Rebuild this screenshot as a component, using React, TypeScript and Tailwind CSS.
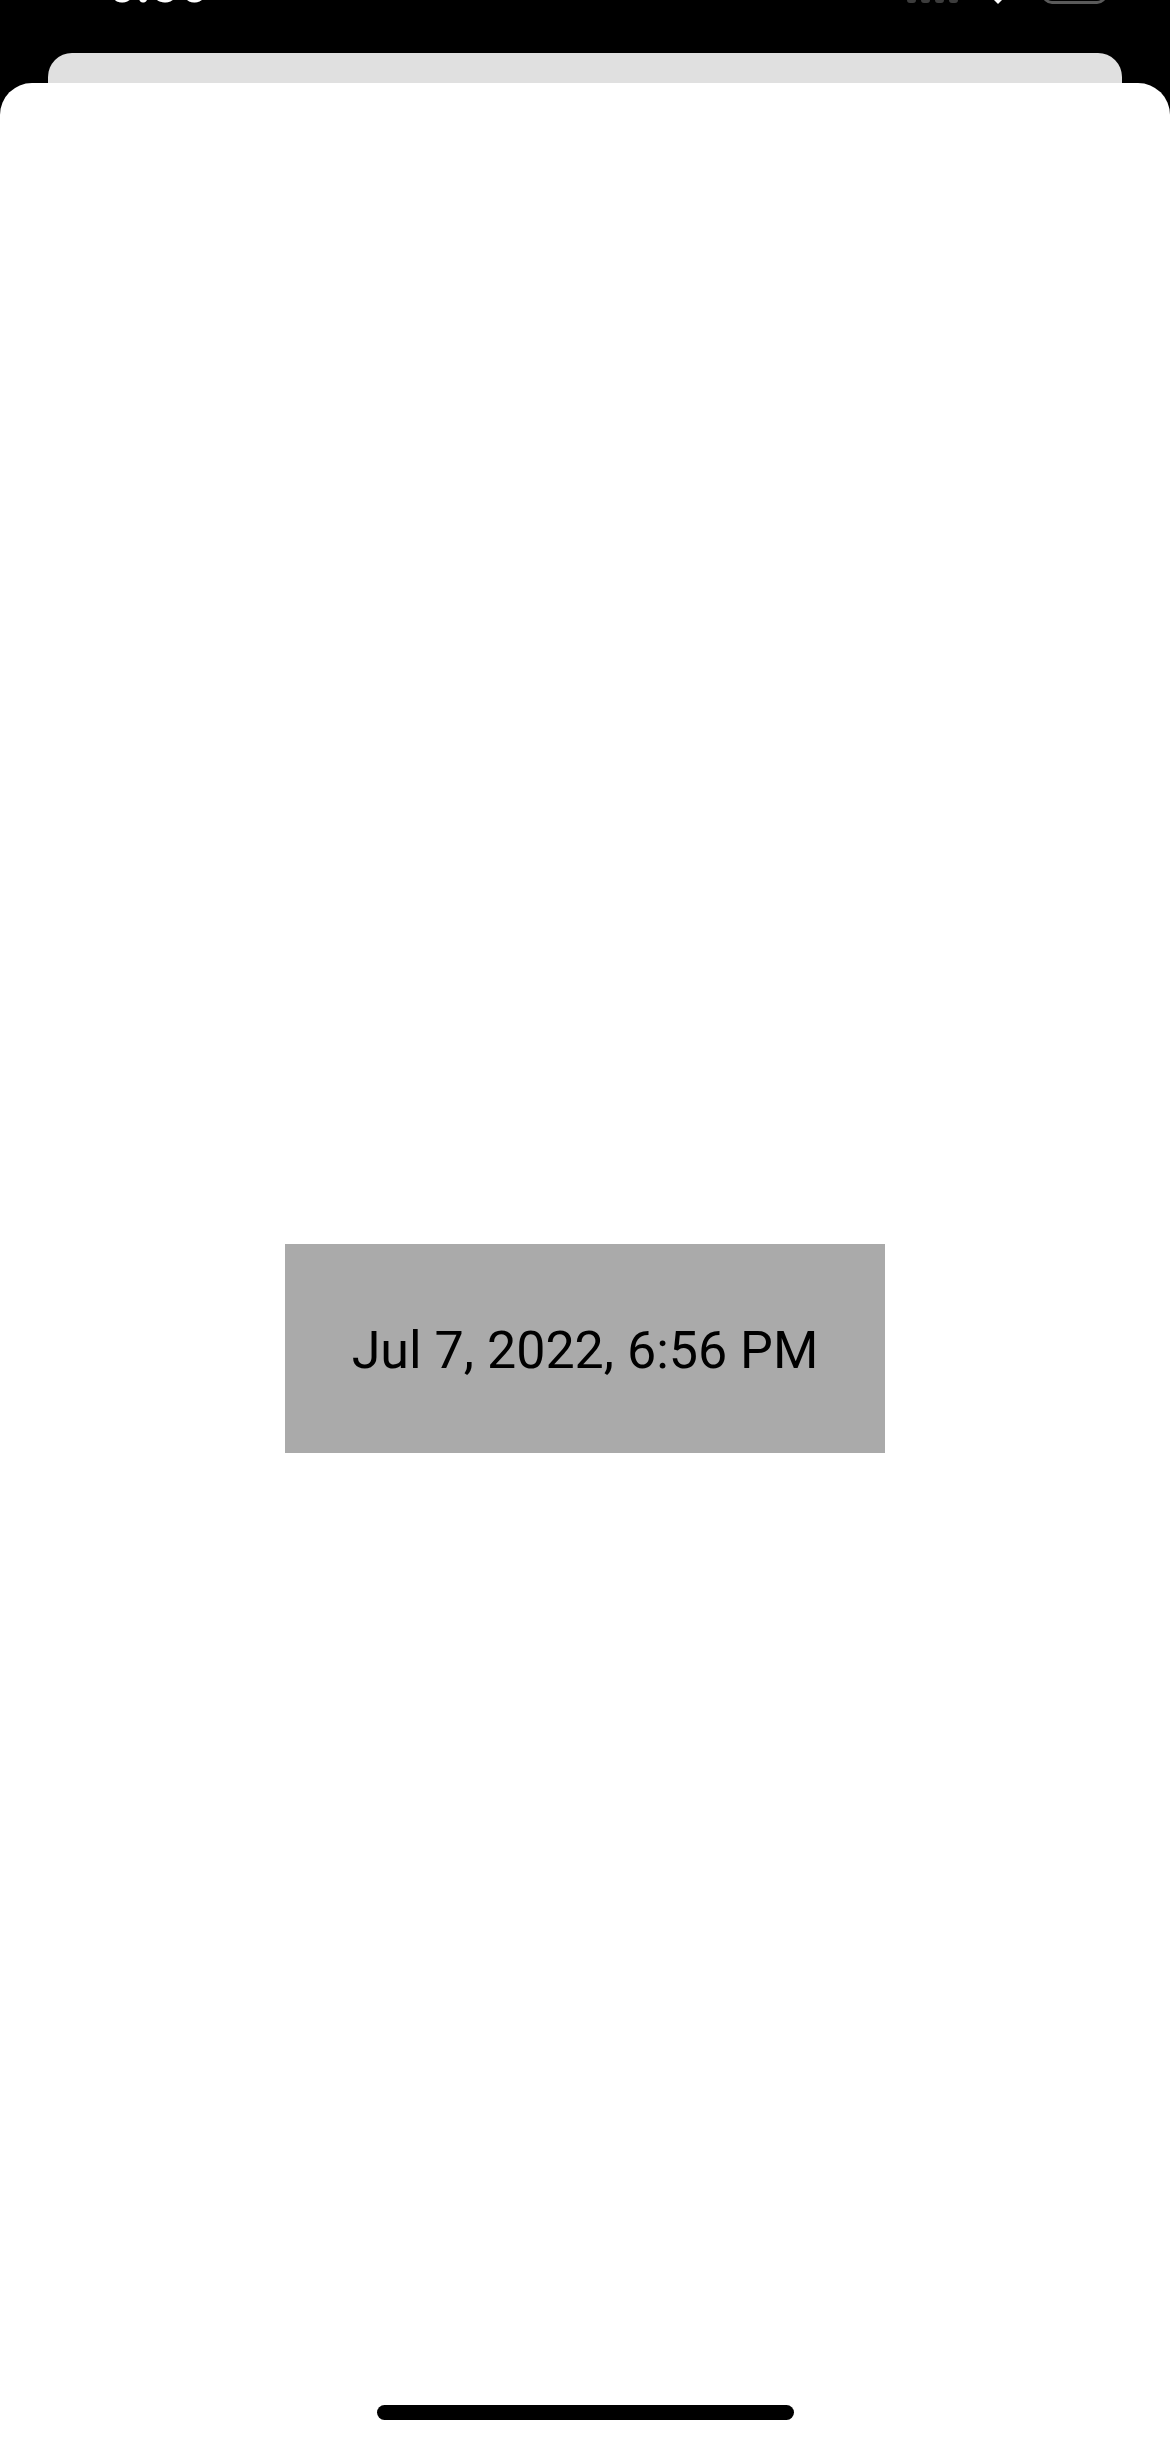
export default function App() {
  return (
    <div
      className="flex h-[2444px] w-[1170px] flex-col overflow-hidden bg-black"
      style={{ fontFamily: "Roboto, 'Liberation Sans', sans-serif" }}
    >
      {/* status bar, mostly scrolled off the top */}
      <div className="flex h-[53px] shrink-0 items-start overflow-hidden">
        <span className="-mt-[41px] ml-[107px] text-[51px] leading-none font-semibold text-white">
          6:56
        </span>
        <div className="ml-auto flex items-start">
          <div className="-mt-[20px] flex items-end gap-[5px]">
            <div className="h-[23px] w-[9px] rounded-[3px] bg-[#3c3c3c]" />
            <div className="h-[23px] w-[9px] rounded-[3px] bg-[#3c3c3c]" />
            <div className="h-[23px] w-[9px] rounded-[3px] bg-[#3c3c3c]" />
            <div className="h-[23px] w-[9px] rounded-[3px] bg-[#3c3c3c]" />
          </div>
          <svg className="-mt-[20px] ml-[23px]" width="34" height="24" viewBox="0 0 34 24">
            <path d="M17 24 L9 16 A11 11 0 0 1 25 16 Z" fill="#ffffff" />
          </svg>
          <div className="-mt-[30px] ml-[27px] mr-[63px] h-[34px] w-[65px] rounded-[10px] border-[3px] border-[#5a5a5a]" />
        </div>
      </div>

      {/* sheet behind */}
      <div className="mx-[48px] h-[30px] shrink-0 rounded-t-[24px] bg-[#e0e0e0]" />

      {/* sheet in front */}
      <div className="flex flex-1 flex-col items-center rounded-t-[32px] bg-white pt-[1161px]">
        <button className="flex h-[209px] w-[600px] items-center justify-center bg-[#aaaaaa] pt-[5px] text-[52px] text-black">
          Jul 7, 2022, 6:56 PM
        </button>
        <div className="mt-auto mb-[24px] h-[15px] w-[417px] rounded-full bg-black" />
      </div>
    </div>
  );
}
